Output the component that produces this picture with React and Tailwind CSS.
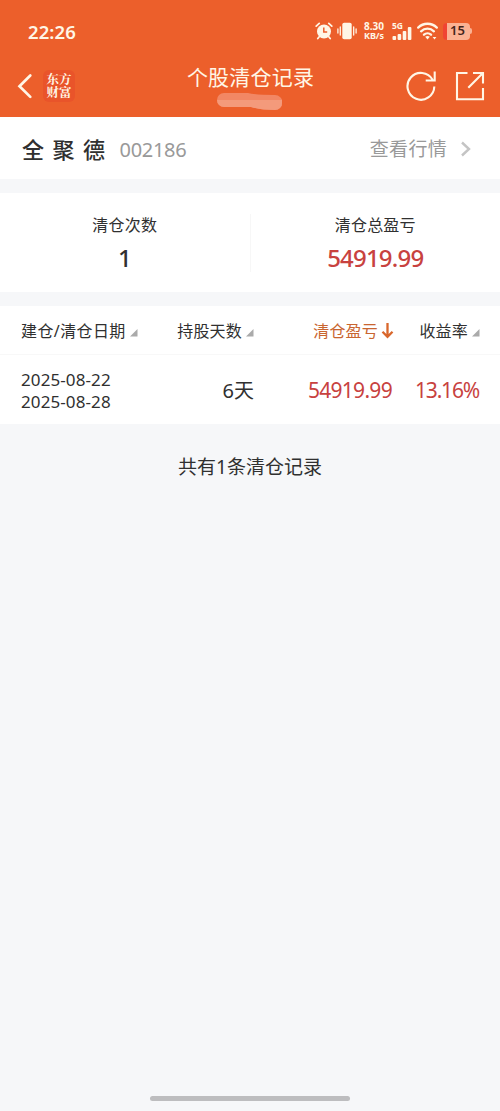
import React from 'react';

const records = [
  { open: '2025-08-22', close: '2025-08-28', days: '6天', profit: '54919.99', rate: '13.16%' },
];

function StatusBar() {
  return (
    <div className="flex h-[62px] items-center justify-between pl-7 pr-[28px] text-[#fff6e6]">
      <span className="pt-[1px] font-['Noto_Sans','Noto_Sans_CJK_SC',sans-serif] text-[18.5px] font-semibold tracking-[0.1px]">22:26</span>
      <div className="flex items-center">
        <svg width="18" height="18" viewBox="0 0 18 18" fill="none">
          <circle cx="9" cy="9.5" r="7" fill="currentColor" />
          <path d="M1.2 4.2 4.2 1.4M16.8 4.2l-3-2.8M4.2 14.8l-1.4 1.8M13.8 14.8l1.4 1.8" stroke="currentColor" strokeWidth="1.7" strokeLinecap="round" />
          <path d="M8.8 5.6v4.3h3.4" stroke="#ec5f2b" strokeWidth="1.5" />
        </svg>
        <svg className="ml-[4px]" width="20" height="18" viewBox="0 0 20 18" fill="none">
          <rect x="5.3" y=".8" width="9.4" height="16.4" rx="1.8" fill="currentColor" />
          <path d="M3.3 5v8M16.7 5v8M.9 7v4M19.1 7v4" stroke="currentColor" strokeWidth="1.3" strokeLinecap="round" />
        </svg>
        <div className="ml-[6px] flex w-[22px] flex-col items-center font-['Noto_Sans',sans-serif] font-bold whitespace-nowrap">
          <span className="block text-[10px] leading-[10px]">8.30</span>
          <span className="block text-[9px] leading-[10px] tracking-[-0.1px]">KB/s</span>
        </div>
        <div className="ml-[7px] w-[20px] font-['Noto_Sans',sans-serif]">
          <div className="text-[8.5px] leading-[8px] font-bold">5G</div>
          <svg className="-mt-[3px]" width="20" height="13" viewBox="0 0 20 13" fill="currentColor">
            <rect x=".5" y="9" width="3.6" height="4" rx="1" />
            <rect x="5.6" y="7" width="3.6" height="6" rx="1" />
            <rect x="10.7" y="4" width="3.6" height="9" rx="1" />
            <rect x="15.8" y="0" width="3.6" height="13" rx="1" />
          </svg>
        </div>
        <svg className="ml-[5px]" width="21" height="18" viewBox="0 0 21 18" fill="none">
          <path d="M1.2 5.6a13.2 13.2 0 0 1 18.6 0M4.1 9.3a9.2 9.2 0 0 1 12.8 0M7 12.7a5.3 5.3 0 0 1 7 0" stroke="currentColor" strokeWidth="2.3" strokeLinecap="round" />
          <path d="m8.2 14.7 2.3 2.7 2.3-2.7q-2.3-1.3-4.6 0ZM15.6 15h3.8l-1.9 2.4Z" fill="currentColor" />
        </svg>
        <div className="ml-[5px] flex items-center">
          <div className="flex h-[17px] w-[27px] items-center justify-center overflow-hidden rounded-[4px] border-l-4 border-[#f04432] bg-[#fbb293] pr-[2px] font-['Noto_Sans',sans-serif] text-[13px] font-semibold text-[#43251b]">15</div>
          <div className="h-[6px] w-[2px] rounded-r-full bg-[#fbb293]" />
        </div>
      </div>
    </div>
  );
}

function NavBar() {
  return (
    <div className="flex h-[55px] text-[#fff6e6]">
      <div className="flex w-[150px] items-start pl-[17px] pt-[8px]">
        <svg className="mt-[3px]" width="16" height="26" viewBox="0 0 16 26" fill="none">
          <path d="M13.3 2.5 2.5 13.2l10.8 10.7" stroke="currentColor" strokeWidth="2.7" strokeLinecap="round" />
        </svg>
        <div className="ml-[10px] flex h-[32px] w-[32px] flex-col items-center justify-center rounded-[6px] bg-[#e9542a] font-['Noto_Serif_CJK_SC','Noto_Sans_CJK_SC',serif] text-[12.5px] font-bold">
          <span className="block leading-[13.5px]">东方</span>
          <span className="block leading-[13.5px]">财富</span>
        </div>
      </div>
      <div className="flex w-[200px] flex-col items-center">
        <h1 className="pl-[1px] text-[21px] leading-[30px] tracking-[0.2px] whitespace-nowrap">个股清仓记录</h1>
        <svg className="-ml-[2px]" width="66" height="19" viewBox="0 0 66 19">
          <path d="M8 1h24q7 2 27 2a7.5 7.5 0 0 1 0 15q-14 0-24-3H8A7 7 0 0 1 8 1Z" fill="#f28764" />
          <path d="M1 8h65v3a7 7 0 0 1-7 7q-14 0-24-3H8a7 7 0 0 1-7-7Z" fill="#f49a7b" />
        </svg>
      </div>
      <div className="flex w-[150px] items-start justify-end pr-[15px] pt-[8px]">
        <svg width="31" height="32" viewBox="0 0 31 32" fill="none" stroke="currentColor" strokeWidth="2.1">
          <path d="M28.3 16.6A13.4 13.4 0 1 1 26.6 9.8M28.7 1.5v9h-9" />
        </svg>
        <svg className="ml-[18px]" width="30" height="32" viewBox="0 0 30 32" fill="none" stroke="currentColor" strokeWidth="2.1">
          <path d="M12.5 3H2v26.2h26V18M18 3h10v10.5M27.7 3.3 13.3 17.8" />
        </svg>
      </div>
    </div>
  );
}

function SortMark() {
  return (
    <svg className="ml-[4px] mt-[3px] shrink-0" width="8" height="8" viewBox="0 0 8 8">
      <path d="M7.5 0v7.5H0Z" fill="#aaa" />
    </svg>
  );
}

function RecordTable() {
  return (
    <section className="mt-[14px] bg-white">
      <div className="grid h-[49px] grid-cols-[233px_140px_86px] items-center border-b border-[#f8f8f8] pt-[2px] pl-[21px] text-[16px] tracking-[0.2px] whitespace-nowrap">
        <div className="flex items-center justify-between">
          <span className="flex items-center tracking-[0.4px]">建仓/清仓日期<SortMark /></span>
          <span className="flex items-center">持股天数<SortMark /></span>
        </div>
        <div className="flex items-center justify-end text-[#c96530]">
          清仓盈亏
          <svg className="-mt-[2px] ml-[3px]" width="13" height="17" viewBox="0 0 13 17" fill="none" stroke="#d9672c" strokeWidth="2.3">
            <path d="M6.5 1v14M1.5 9.8l5 5 5-5" />
          </svg>
        </div>
        <div className="flex items-center justify-end">收益率<SortMark /></div>
      </div>
      {records.map((record) => (
        <div key={record.open} className="grid h-[69px] grid-cols-[233px_138px_87px] items-center pt-[2px] pl-[21px] text-[21px] whitespace-nowrap">
          <div className="flex items-center justify-between">
            <div className="text-[17px] leading-[22px] tracking-[0.1px]">
              <div>{record.open}</div>
              <div>{record.close}</div>
            </div>
            <span className="text-[20px]">{record.days}</span>
          </div>
          <span className="pt-[1px] text-right tracking-[-0.7px] text-[#c8423f]">{record.profit}</span>
          <span className="pt-[1px] text-right tracking-[-1.2px] text-[#c8423f]">{record.rate}</span>
        </div>
      ))}
    </section>
  );
}

function App() {
  return (
    <div className="flex h-[1111px] w-[500px] flex-col bg-[#f6f7f9] font-['Noto_Sans','Noto_Sans_CJK_SC',sans-serif] text-[#303030]">
      <header className="h-[117px] bg-[#ec5f2b]">
        <StatusBar />
        <NavBar />
      </header>

      <section className="flex h-[62px] items-center bg-white pt-[2px] pl-[22px] pr-[29px]">
        <h2 className="text-[22px] font-medium tracking-[8.5px]">全聚德</h2>
        <span className="ml-[6px] pt-[1px] text-[20px] tracking-[-0.3px] text-[#999]">002186</span>
        <span className="ml-auto pt-[1px] text-[19px] tracking-[0.3px] text-[#999]">查看行情</span>
        <svg className="ml-[13px]" width="11" height="16" viewBox="0 0 11 16" fill="none">
          <path d="m2 1.5 7 6.5-7 6.5" stroke="#c4c4c4" strokeWidth="2.4" />
        </svg>
      </section>

      <section className="mt-[14px] flex h-[99px] items-center bg-white text-center">
        <div className="flex h-[58px] flex-1 flex-col justify-center border-r border-[#f7f7f7]">
          <div className="pt-[3px] text-[16px] leading-[24px] tracking-[0.2px]">清仓次数</div>
          <div className="mt-[4px] text-[24px] leading-[34px] font-medium">1</div>
        </div>
        <div className="flex h-[58px] flex-1 flex-col justify-center">
          <div className="pt-[3px] text-[16px] leading-[24px] tracking-[0.2px]">清仓总盈亏</div>
          <div className="mt-[4px] text-[24px] leading-[34px] font-medium tracking-[-0.8px] text-[#c8423f]">54919.99</div>
        </div>
      </section>

      <RecordTable />

      <p className="mt-[29px] text-center text-[19px] leading-[28px]">共有1条清仓记录</p>

      <div className="mx-auto mt-auto mb-[10px] h-[5px] w-[200px] rounded-full bg-[#bdbdbf]" />
    </div>
  );
}

export default App;
